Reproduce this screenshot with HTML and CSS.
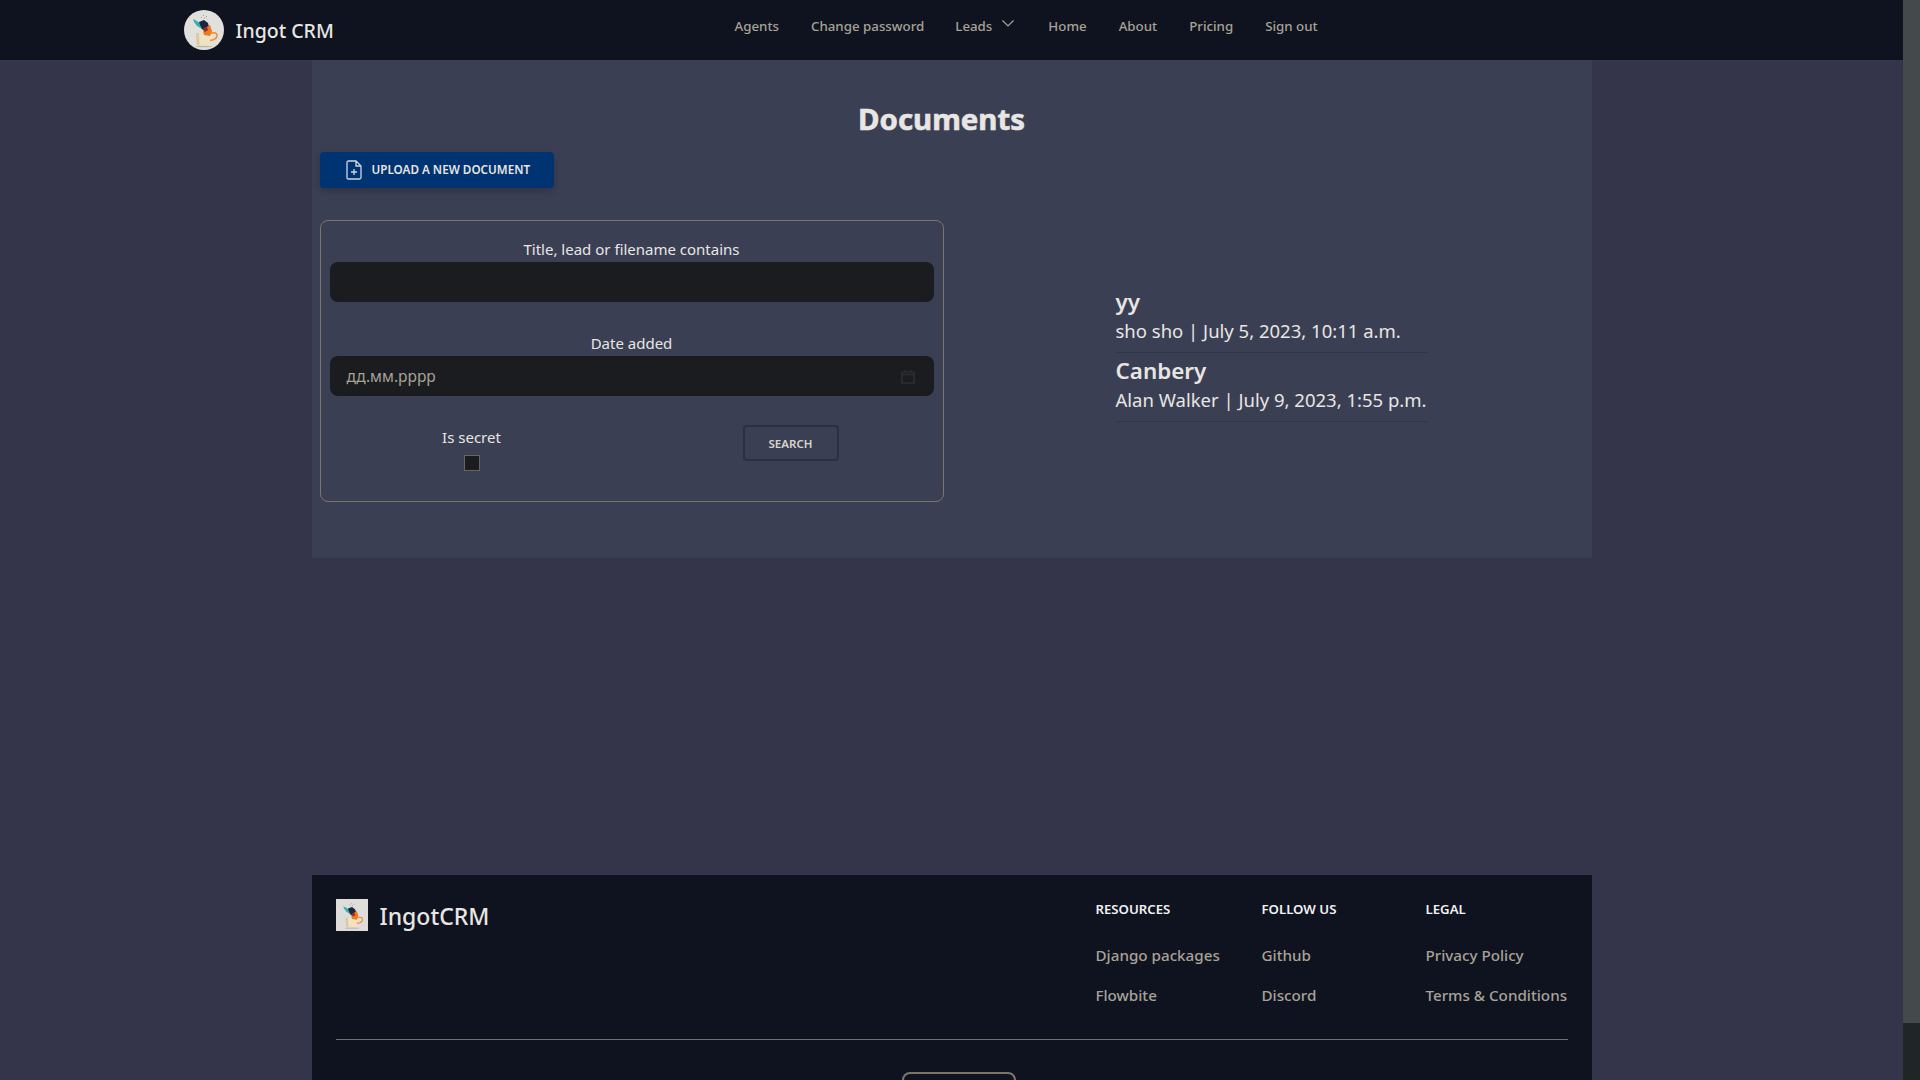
FILE: index.html
```html
<!DOCTYPE html>
<html lang="en">
<head>
<meta charset="utf-8">
<title>Documents</title>
<link rel="stylesheet" href="styles.css">
</head>
<body>
<svg class="defs" width="0" height="0">
  <symbol id="mug" viewBox="0 0 40 40">
    <path d="M12 23 L28 23 L27.5 33 Q27 36 24 36 L16 36 Q13 36 12.500 33 Z" fill="#efe3c4"/>
    <path d="M12 23 L15 23 L15.500 36 Q13 36 12.500 33 Z" fill="#d9c9a3"/>
    <path d="M26.500 23.500 Q33 21.500 33 25.500 Q33 29.500 26 30.500" fill="none" stroke="#f58a24" stroke-width="1.500"/>
    <path d="M9 9 L13 11 L17 14 L18 19 L13 16 L10 12 Z" fill="#37b0b4"/>
    <path d="M15 12 L20 10 L24 13 L25 17 L22 22 L18 19 L16 15 Z" fill="#1c2440"/>
    <path d="M21 18 L26 15 L28 21 L26 26 L20 25 L19 21 Z" fill="#ee7a1f"/>
    <path d="M19 18 L23 17 L24 20 L21 22 Z" fill="#8c2f26"/>
    <g fill="#9a9a9e">
      <rect x="19" y="5" width="1" height="1"/>
      <rect x="22" y="6" width="1" height="1"/>
      <rect x="17" y="7" width="1" height="1"/>
      <rect x="20" y="7.500" width="1" height="1"/>
    </g>
    <ellipse cx="20" cy="36.500" rx="9" ry="0.800" fill="#bdb6aa"/>
  </symbol>
</svg>

<div class="page">
  <nav class="navbar">
    <div class="navbar-inner">
      <a class="brand">
        <svg class="brand-logo" width="40" height="40"><use href="#mug"/></svg>
        <span class="brand-name">Ingot CRM</span>
      </a>
      <ul class="nav-links">
        <li>Agents</li>
        <li>Change password</li>
        <li class="has-caret">Leads
          <svg class="caret" width="14" height="14" viewBox="0 0 14 14"><path d="M1.500 3.500 L7 9 L12.500 3.500" fill="none" stroke="currentColor" stroke-width="1.200"/></svg>
        </li>
        <li>Home</li>
        <li>About</li>
        <li>Pricing</li>
        <li>Sign out</li>
      </ul>
    </div>
  </nav>

  <main class="content">
    <h1 class="title">Documents</h1>
    <a class="upload-btn">
      <svg width="16" height="20" viewBox="0 0 16 20"><path d="M2.500 1 H10 L15 6 V17.500 Q15 19 13.500 19 H2.500 Q1 19 1 17.500 V2.500 Q1 1 2.500 1 Z M10 1 V6 H15 M8 9 V15 M5 12 H11" fill="none" stroke="#cfd6e2" stroke-width="1.300"/></svg>
      <span>Upload a new document</span>
    </a>

    <div class="doc-row">
      <form class="filter">
        <label class="field-label">Title, lead or filename contains</label>
        <div class="input"></div>
        <label class="field-label second">Date added</label>
        <div class="input date">
          <span>дд.мм.рррр</span>
          <svg width="14" height="15" viewBox="0 0 14 15"><path d="M1 3 H13 V14 H1 Z M1 5.500 H13 M4 1 V3 M10 1 V3" fill="none" stroke="#2c2d30" stroke-width="1.600"/></svg>
        </div>
        <div class="filter-bottom">
          <div class="secret">
            <label class="field-label">Is secret</label>
            <span class="checkbox"></span>
          </div>
          <button class="search-btn" type="button">Search</button>
        </div>
      </form>

      <ul class="doc-list">
        <li>
          <h3>yy</h3>
          <p>sho sho | July 5, 2023, 10:11 a.m.</p>
        </li>
        <li>
          <h3>Canbery</h3>
          <p>Alan Walker | July 9, 2023, 1:55 p.m.</p>
        </li>
      </ul>
    </div>
  </main>

  <footer class="footer">
    <div class="footer-top">
      <a class="footer-brand">
        <svg class="footer-logo" width="32" height="32"><use href="#mug"/></svg>
        <span>IngotCRM</span>
      </a>
      <div class="footer-cols">
        <div>
          <h4>Resources</h4>
          <p>Django packages</p>
          <p>Flowbite</p>
        </div>
        <div>
          <h4>Follow us</h4>
          <p>Github</p>
          <p>Discord</p>
        </div>
        <div>
          <h4>Legal</h4>
          <p>Privacy Policy</p>
          <p>Terms &amp; Conditions</p>
        </div>
      </div>
    </div>
    <hr class="footer-line">
    <div class="footer-pill"></div>
  </footer>
</div>

<div class="scrollbar"><div class="scrollbar-thumb"></div></div>
</body>
</html>
```

FILE: styles.css
```css
* {
  box-sizing: border-box;
}

html, body {
  height: 100%;
  margin: 0;
}

body {
  display: flex;
  overflow: hidden;
  background: #34354a;
  color: #e8e6e3;
  font-family: "Noto Sans", "Open Sans", sans-serif;
  font-size: 16px;
}

.defs {
  position: absolute;
}

ul {
  list-style: none;
  margin: 0;
  padding: 0;
}

.page {
  flex: 1;
  min-width: 0;
  overflow: hidden;
}

.scrollbar {
  width: 17px;
  background: #202526;
}

.scrollbar-thumb {
  height: 1023px;
  background: #44494a;
}

.navbar {
  height: 60px;
  background: #0f1320;
}

.navbar-inner {
  width: 1536px;
  margin: 0 auto;
  display: grid;
  grid-template-columns: 551px auto;
}

.brand {
  display: flex;
  align-items: center;
  gap: 12px;
  height: 60px;
}

.brand-logo {
  border-radius: 50%;
  background: #e2e0dc;
}

.brand-name {
  padding-top: 1px;
  font-size: 19.500px;
  font-weight: 500;
}

.nav-links {
  display: flex;
  gap: 32px;
  padding-top: 16px;
  font-size: 13.300px;
  font-weight: 500;
  line-height: 20px;
  color: #a8a297;
}

.has-caret {
  display: flex;
  gap: 9px;
  margin-right: 1px;
  margin-left: -1px;
}

.caret {
  margin-top: 1px;
}

.content {
  width: 1280px;
  height: 498px;
  margin: 0 auto;
  padding: 0 8px;
  background: #3b3f54;
}

.title {
  margin: 0;
  padding: 41px 20px 0 0;
  font-size: 29.400px;
  font-weight: 700;
  line-height: 36px;
  text-align: center;
  color: #e8e6e3;
  -webkit-text-stroke: 0.6px #e8e6e3;
}

.upload-btn {
  display: flex;
  align-items: center;
  gap: 10px;
  width: 234px;
  height: 36px;
  margin-top: 15px;
  padding-left: 26px;
  background: #003371;
  border-radius: 4px;
  box-shadow: 0 3px 6px rgba(0, 0, 0, 0.2);
  font-size: 11.700px;
  font-weight: 600;
  text-transform: uppercase;
}

.upload-btn span {
  margin-top: -2px;
}

.doc-row {
  display: flex;
  margin-top: 32px;
}

.filter {
  width: 624px;
  height: 282px;
  padding: 16px 9px;
  border: 1px solid #7c7569;
  border-radius: 8px;
}

.field-label {
  display: block;
  font-size: 15px;
  line-height: 24px;
  text-align: center;
  white-space: nowrap;
}

.second {
  margin-top: 29px;
}

.input {
  height: 40px;
  margin-top: 1px;
  background: #1b1c1f;
  border-radius: 8px;
}

.date {
  display: flex;
  align-items: center;
  justify-content: space-between;
  padding: 0 19px 0 17px;
  color: #a8a297;
  font-size: 15.500px;
}

.filter-bottom {
  display: flex;
  margin-top: 29px;
}

.secret {
  width: 58px;
  margin-left: 113px;
  display: flex;
  flex-direction: column;
  align-items: center;
}

.checkbox {
  width: 16px;
  height: 16px;
  margin-top: 6px;
  background: #1b1c1f;
  border: 1px solid #6b665d;
}

.search-btn {
  width: 96px;
  height: 36px;
  margin-left: auto;
  margin-right: 95px;
  background: transparent;
  border: 2px solid #2c2f3d;
  border-radius: 4px;
  color: #d8d4cc;
  font-family: inherit;
  font-size: 11.500px;
  font-weight: 600;
  text-transform: uppercase;
}

.doc-list {
  width: 312px;
  margin-left: 172px;
  padding-top: 68px;
}

.doc-list li {
  padding-bottom: 6px;
  margin-bottom: 4px;
  border-bottom: 1px solid #2e3748;
}

.doc-list h3 {
  margin: 0;
  font-size: 22.400px;
  font-weight: 600;
  line-height: 28px;
}

.doc-list p {
  margin: 0;
  font-size: 18.500px;
  line-height: 30px;
  white-space: nowrap;
}

.footer {
  width: 1280px;
  height: 205px;
  margin: 317px auto 0;
  padding: 24px 24px 0;
  background: #0f1320;
}

.footer-top {
  display: flex;
  justify-content: space-between;
}

.footer-brand {
  display: flex;
  align-items: center;
  gap: 12px;
  height: 32px;
  font-size: 23px;
  font-weight: 500;
}

.footer-brand span {
  padding-top: 2px;
}

.footer-logo {
  background: #dfddda;
}

.footer-cols {
  display: grid;
  grid-template-columns: 166px 164px 142px;
}

.footer-cols h4 {
  margin: 0 0 24px;
  font-size: 13.200px;
  font-weight: 600;
  line-height: 20px;
  text-transform: uppercase;
  color: #f2f2f2;
}

.footer-cols p {
  margin: 0 0 16px;
  font-size: 15.200px;
  font-weight: 500;
  line-height: 24px;
  color: #a8a297;
  white-space: nowrap;
}

.footer-line {
  height: 1px;
  margin: 16px 0 0;
  border: 0;
  background: #6f6f6f;
}

.footer-pill {
  width: 114px;
  height: 40px;
  margin: 32px 0 0 566px;
  border: 2px solid #7c7569;
  border-radius: 8px;
}
```
